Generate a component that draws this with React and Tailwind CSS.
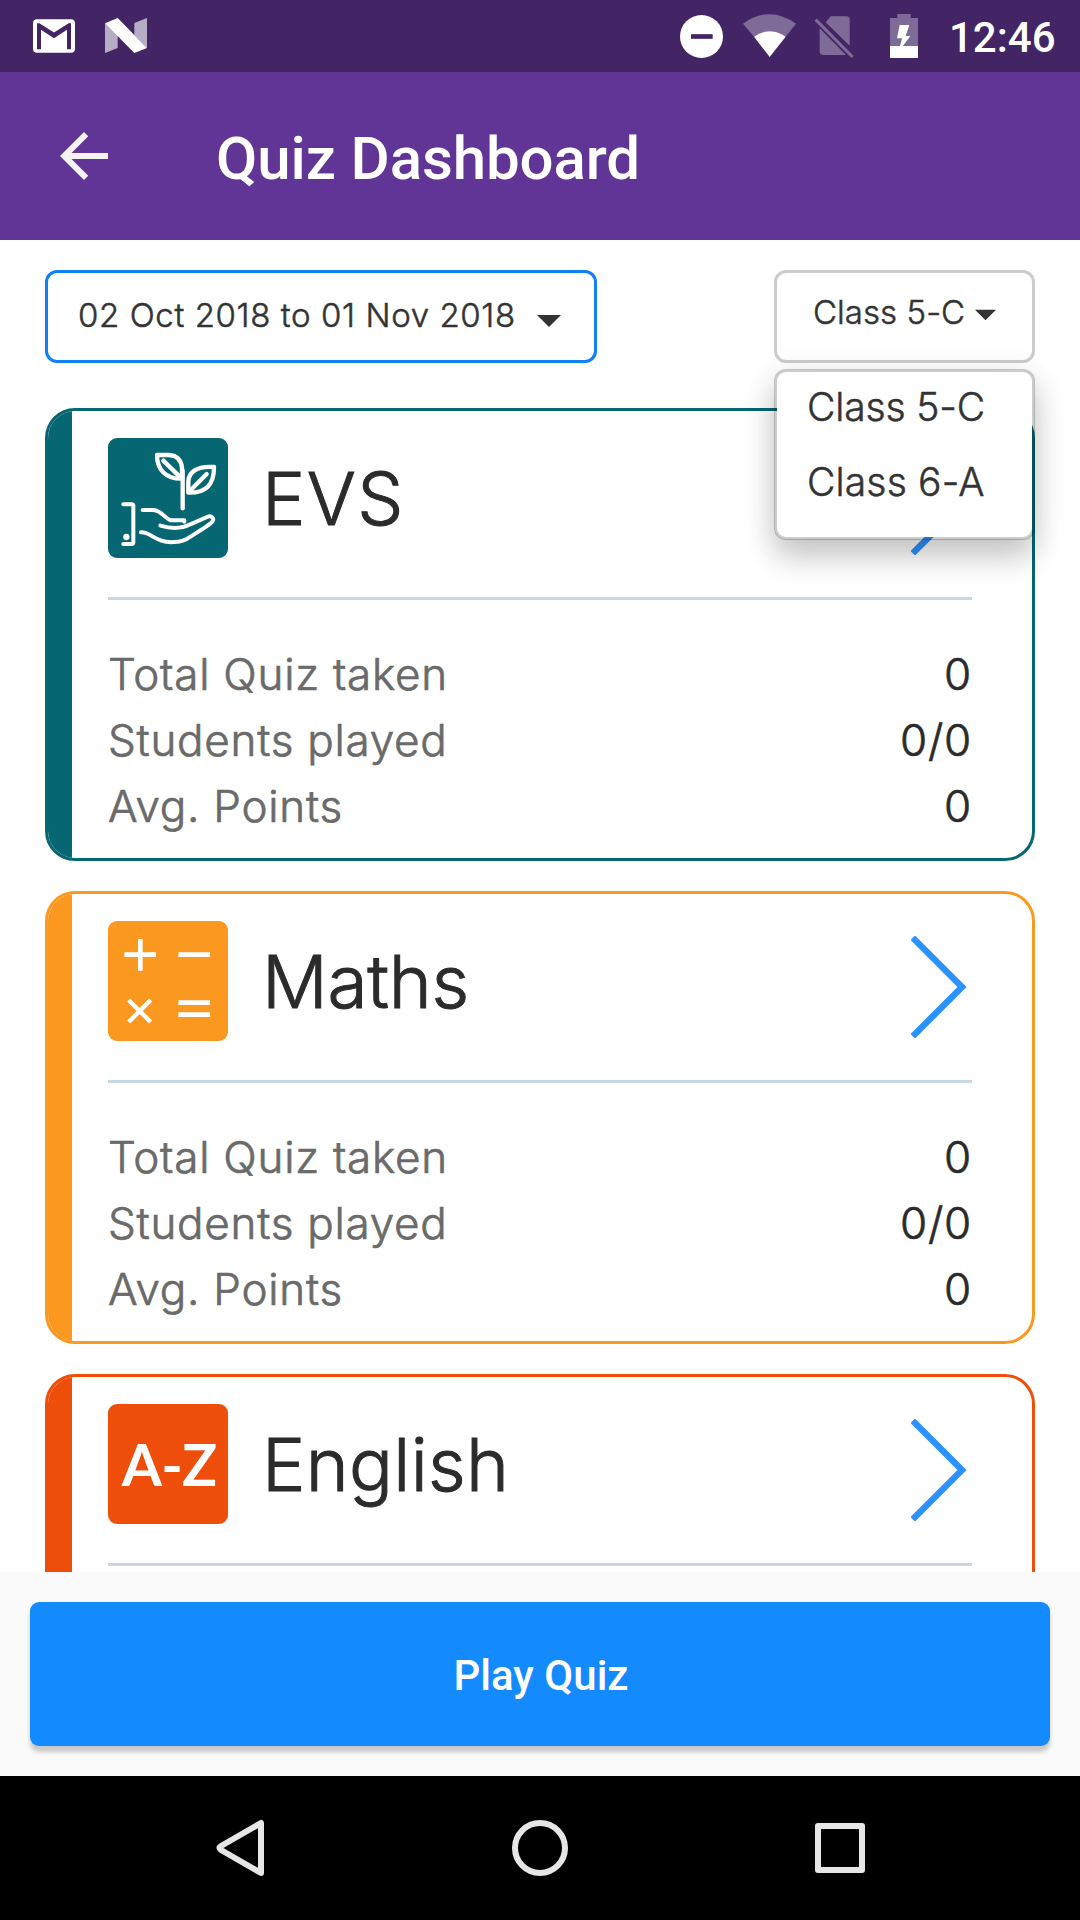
const STATS = [
  { label: "Total Quiz taken", value: "0" },
  { label: "Students played", value: "0/0" },
  { label: "Avg. Points", value: "0" },
];

const SUBJECTS = [
  { name: "EVS", icon: EvsIcon, border: "border-[#066773]", fill: "bg-[#066773]", spacing: "tracking-[1.3px]", stats: STATS },
  { name: "Maths", icon: MathsIcon, border: "border-[#fb9820]", fill: "bg-[#fb9820]", spacing: "tracking-[-0.3px]", stats: STATS },
  { name: "English", icon: EnglishIcon, border: "border-[#ee4d0a]", fill: "bg-[#ee4d0a]", spacing: "tracking-[0.3px]", stats: [] },
];

function EvsIcon() {
  return (
    <svg viewBox="0 0 360 360" className="size-full" fill="none" stroke="white" strokeWidth="13" strokeLinecap="round" strokeLinejoin="round">
      <path d="M147 51H182C208 52 221 69 222 91V122C173 123 147 95 147 51Z" />
      <path d="M166 68L212 113" />
      <path d="M318 87C266 83 241 103 241 132V164C296 165 318 139 318 87Z" />
      <path d="M296 108L246 158" />
      <path d="M224 98V211" />
      <path d="M46 199H71Q76 199 76 204V313Q76 318 71 318H46" strokeWidth="12" />
      <circle cx="55" cy="297" r="9.5" fill="white" stroke="none" />
      <path d="M104 216H136C160 217 169 240 188 247H229V251" strokeWidth="12" />
      <path d="M157 263C194 274 222 272 247 259L297 237C310 231 321 241 312 252C304 262 256 290 236 303C217 314 180 315 160 308C130 298 122 282 99 283" strokeWidth="12" />
    </svg>
  );
}

function MathsIcon() {
  return (
    <svg viewBox="0 0 360 360" className="size-full" fill="none" stroke="white" strokeWidth="14">
      <path d="M49 101H144M97 54V149M211 101H306M211 245H306M211 281H306" />
      <path d="M62 237L128 303M128 237L62 303" strokeWidth="13" />
    </svg>
  );
}

function EnglishIcon() {
  return (
    <span className="flex size-full items-center justify-center pl-[2px] font-['Lato',sans-serif] text-[58px] leading-none font-bold tracking-[-0.8px] text-white">
      A-Z
    </span>
  );
}

function StatusBar() {
  return (
    <div className="flex h-[72px] shrink-0 bg-[#432566] pl-[33px] text-white">
      <svg viewBox="0 0 126 101" className="mt-[19px] h-[34px] w-[42px]">
        <rect width="126" height="101" rx="12" fill="white" />
        <path d="M12 90V12H19L63 40L107 12H114V90H102V32L63 57L24 32V90Z" fill="#432566" />
      </svg>
      <svg viewBox="0 0 126 105" className="mt-[18px] ml-[30px] h-[35px] w-[42px]" fill="white">
        <path d="M0 16L38 48V90L0 105ZM88 15L126 0V90L88 52Z" opacity="0.62" />
        <path d="M0 16L38 0L126 90L88 105Z" />
      </svg>
      <svg viewBox="0 0 129 129" className="mt-[15px] ml-[533px] size-[43px]">
        <circle cx="64.5" cy="64.5" r="64.5" fill="white" />
        <path d="M33 64.5H98" stroke="#432566" strokeWidth="14" />
      </svg>
      <svg viewBox="0 0 159 129" className="mt-[14px] ml-[20px] h-[43px] w-[53px]" fill="white">
        <path d="M0 29Q80 -28 159 29L128 68Q80 36 33 68Z" opacity="0.32" />
        <path d="M33 68Q80 36 128 68L80 129Z" />
      </svg>
      <svg viewBox="0 0 120 129" className="mt-[15px] ml-[18px] h-[43px] w-[40px]" fill="white" opacity="0.32">
        <path d="M35 22L50 4H97Q107 4 107 14V92ZM17 40L96 120H28Q17 120 17 109Z" />
        <path d="M5 14L116 126" stroke="white" strokeWidth="9" />
      </svg>
      <svg viewBox="0 0 84 132" className="mt-[14px] ml-[36px] h-[44px] w-[28px]" fill="white">
        <path d="M22 0H62V12H84V96H0V12H22Z" opacity="0.32" />
        <path d="M0 96H84V132H0ZM29 33H58L47 66H61L38 97H30L36 73H21Z" />
      </svg>
      <span className="ml-[31px] text-[42px] leading-[75px] font-medium">12:46</span>
    </div>
  );
}

function Header() {
  return (
    <header className="flex h-[168px] shrink-0 items-center bg-[#613595] pl-[48px] text-white">
      <svg viewBox="0 0 24 24" className="size-[72px]" fill="#f3f3f3">
        <path d="M20 11H7.83l5.59-5.59L12 4l-8 8 8 8 1.41-1.41L7.83 13H20v-2z" />
      </svg>
      <h1 className="mt-[6px] ml-[96px] text-[60px] leading-none font-medium tracking-[-0.1px]">Quiz Dashboard</h1>
    </header>
  );
}

function Caret({ className }) {
  return (
    <svg viewBox="0 0 24 12" className={className} fill="#333">
      <path d="M0 0H24L12 12Z" />
    </svg>
  );
}

function Filters() {
  return (
    <div className="flex justify-between font-['Inter',sans-serif] text-[33px] leading-[40px] font-light text-[#333] [-webkit-text-stroke:0.5px]">
      <div className="flex h-[93px] w-[552px] rounded-[12px] border-[3px] border-[#1080f5] pt-[22px] pl-[30px]">
        <span className="w-[459px] tracking-[0.6px] whitespace-nowrap">02 Oct 2018 to 01 Nov 2018</span>
        <Caret className="mt-[20px] h-[12px] w-[24px]" />
      </div>
      <div className="relative flex h-[93px] w-[261px] rounded-[12px] border-[3px] border-[#ccc] pt-[19px] pl-[36px]">
        <span className="w-[162px] tracking-[0.05px] whitespace-nowrap">Class 5-C</span>
        <Caret className="mt-[17px] h-[12px] w-[21px]" />
        <ul className="absolute top-[96px] -left-[3px] z-10 flex h-[171px] w-[261px] flex-col gap-[35px] rounded-[12px] border-[3px] border-black/20 bg-white bg-clip-padding pt-[15px] pl-[30px] text-[39px] shadow-[0_18px_30px_rgba(0,0,0,0.2),0_2px_34px_rgba(0,0,0,0.07)]">
          <li className="tracking-[-0.15px]">Class 5-C</li>
          <li className="tracking-[0.15px]">Class 6-A</li>
        </ul>
      </div>
    </div>
  );
}

function SubjectCard({ name, icon: Icon, border, fill, spacing, stats }) {
  return (
    <section className={`flex h-[453px] shrink-0 overflow-hidden rounded-[30px] border-[3px] ${border}`}>
      <div className={`w-[24px] ${fill}`} />
      <div className="ml-[36px] w-[864px] pt-[27px] font-['Inter',sans-serif] font-light text-[#2b2b2b]">
        <div className="flex items-center">
          <div className={`size-[120px] overflow-hidden rounded-[9px] ${fill}`}>
            <Icon />
          </div>
          <h2 className={`mt-[2px] ml-[34px] flex-1 text-[73px] leading-[90px] [-webkit-text-stroke:1px] ${spacing}`}>{name}</h2>
          <svg viewBox="0 0 56 102" className="mt-[11px] mr-[5px] h-[102px] w-[56px]" fill="none">
            <path d="M4 4L51 51L4 98" stroke="#2b93ff" strokeWidth="6.5" strokeLinecap="square" />
          </svg>
        </div>
        <div className="mt-[39px] h-[3px] bg-[#c5d8e4]" />
        <dl className="mt-[41px] text-[44px] leading-[66px] [-webkit-text-stroke:0.7px]">
          {stats.map((s) => (
            <div key={s.label} className="flex justify-between">
              <dt className="tracking-[0.75px] text-[#6a6a6a]">{s.label}</dt>
              <dd className="tracking-[0.8px]">{s.value}</dd>
            </div>
          ))}
        </dl>
      </div>
    </section>
  );
}

function NavBar() {
  return (
    <nav className="flex h-[144px] shrink-0 items-center justify-center gap-[240px] bg-black">
      <svg viewBox="0 0 60 60" className="size-[60px]" fill="none" stroke="#e6e6e6" strokeWidth="6" strokeLinejoin="round">
        <path d="M51 5V55L11 32Q8 30 11 28Z" />
      </svg>
      <svg viewBox="0 0 60 60" className="size-[60px]" fill="none" stroke="#e6e6e6" strokeWidth="6">
        <circle cx="30" cy="30" r="25" />
      </svg>
      <svg viewBox="0 0 60 60" className="size-[60px]" fill="none" stroke="#e6e6e6" strokeWidth="6" strokeLinejoin="round">
        <rect x="8" y="8" width="44" height="44" />
      </svg>
    </nav>
  );
}

export default function App() {
  return (
    <div className="flex h-[1920px] w-[1080px] flex-col overflow-hidden bg-white font-['Roboto',sans-serif]">
      <StatusBar />
      <Header />
      <main className="flex min-h-0 flex-1 flex-col overflow-hidden px-[45px] pt-[30px]">
        <Filters />
        <div className="mt-[45px] flex flex-col gap-[30px]">
          {SUBJECTS.map((s) => (
            <SubjectCard key={s.name} {...s} />
          ))}
        </div>
      </main>
      <footer className="h-[204px] shrink-0 bg-[#fafafa] px-[30px] pt-[30px]">
        <button className="block h-[144px] w-full rounded-[9px] bg-[#148aff] pt-[3px] pl-[2px] text-[42px] font-medium text-white shadow-[0_6px_4px_rgba(0,0,0,0.2)]">
          Play Quiz
        </button>
      </footer>
      <NavBar />
    </div>
  );
}
